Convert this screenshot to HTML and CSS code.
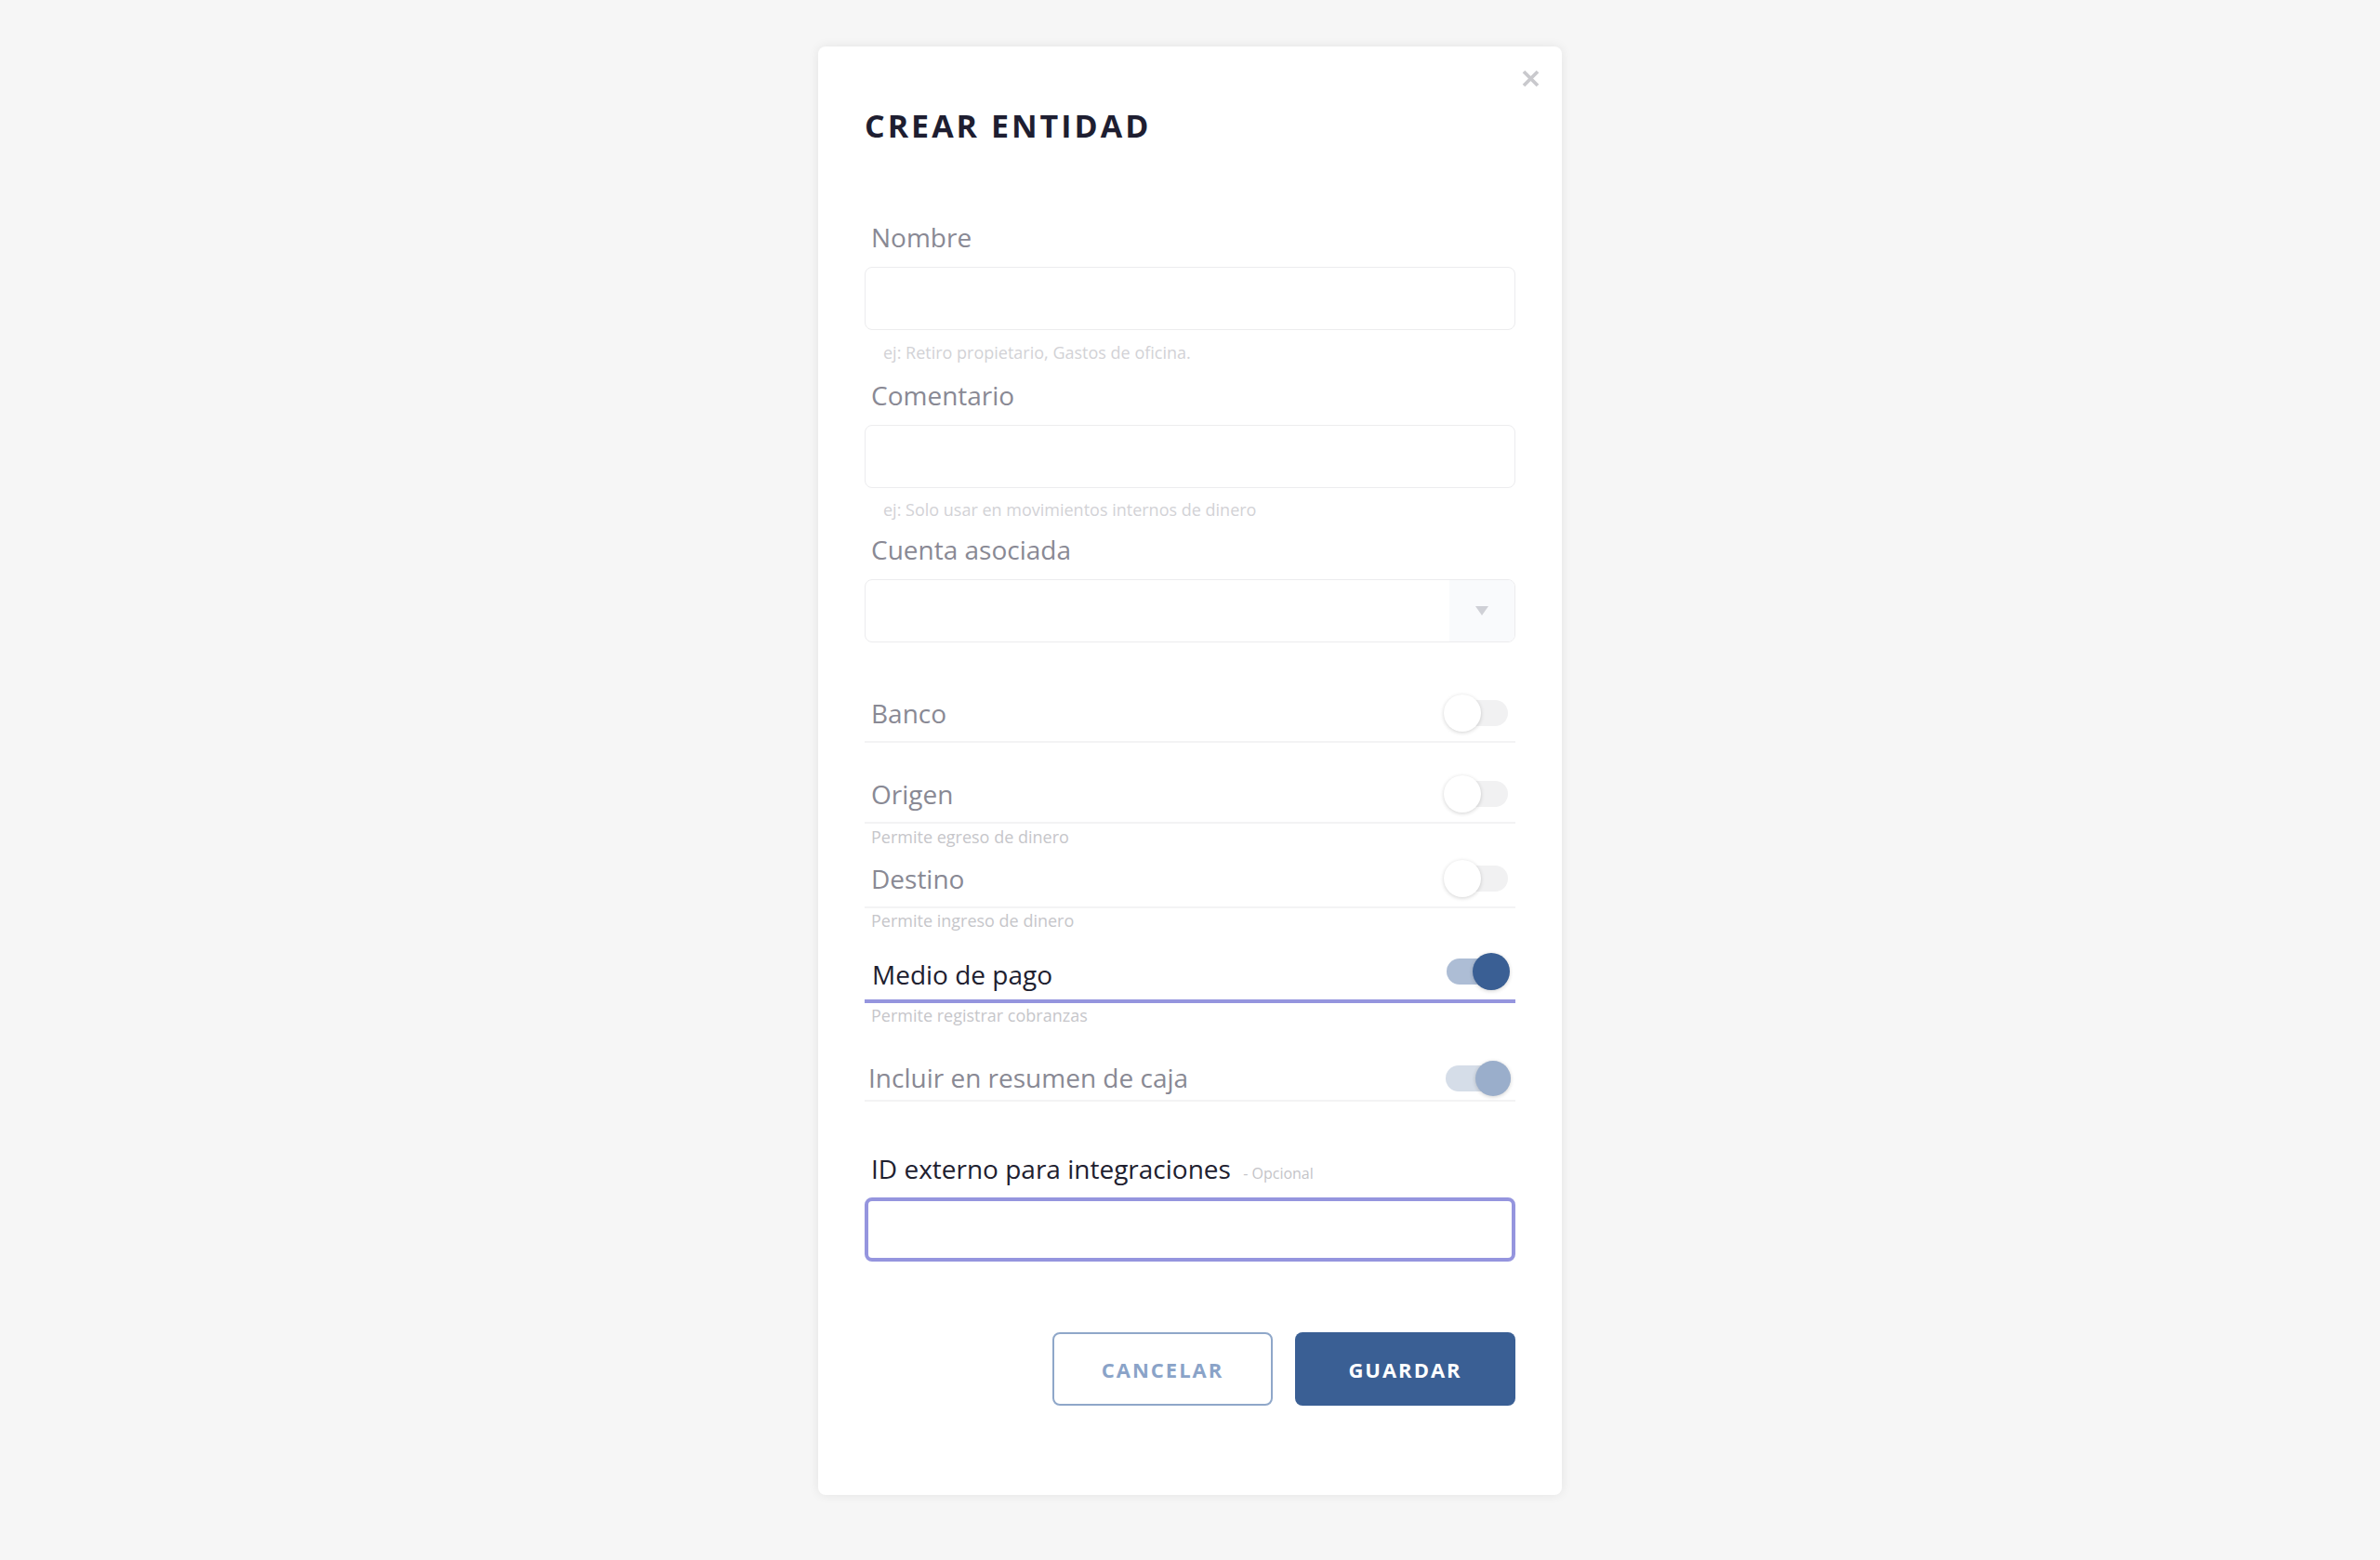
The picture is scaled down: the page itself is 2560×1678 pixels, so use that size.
FILE: index.html
```html
<!DOCTYPE html>
<html lang="es">
<head>
<meta charset="utf-8">
<title>Crear entidad</title>
<link rel="stylesheet" href="styles.css">
</head>
<body>
<div class="modal">
  <button class="close" aria-label="Cerrar">
    <svg width="19" height="19" viewBox="0 0 19 19"><path d="M2 2 L17 17 M17 2 L2 17" stroke="#c9c9cd" stroke-width="3.8" stroke-linecap="butt" fill="none"/></svg>
  </button>
  <h1 class="title">CREAR ENTIDAD</h1>

  <div class="field field-first">
    <div class="label">Nombre</div>
    <div class="input"></div>
    <div class="hint hint-first">ej: Retiro propietario, Gastos de oficina.</div>
  </div>

  <div class="field field-second">
    <div class="label">Comentario</div>
    <div class="input"></div>
    <div class="hint">ej: Solo usar en movimientos internos de dinero</div>
  </div>

  <div class="field field-third">
    <div class="label">Cuenta asociada</div>
    <div class="select">
      <div class="select-value"></div>
      <div class="select-arrow"><span class="triangle"></span></div>
    </div>
  </div>

  <div class="row row-banco">
    <div class="row-label">Banco</div>
    <span class="switch"><span class="knob"></span></span>
  </div>

  <div class="row row-origen">
    <div class="row-label">Origen</div>
    <span class="switch"><span class="knob"></span></span>
  </div>
  <div class="row-hint row-hint-tight">Permite egreso de dinero</div>

  <div class="row row-destino">
    <div class="row-label">Destino</div>
    <span class="switch"><span class="knob"></span></span>
  </div>
  <div class="row-hint">Permite ingreso de dinero</div>

  <div class="row row-active">
    <div class="row-label row-label-dark">Medio de pago</div>
    <span class="switch switch-on"><span class="knob"></span></span>
  </div>
  <div class="row-hint">Permite registrar cobranzas</div>

  <div class="row row-caja">
    <div class="row-label row-label-caja">Incluir en resumen de caja</div>
    <span class="switch switch-muted"><span class="knob"></span></span>
  </div>

  <div class="field field-id">
    <div class="label label-dark">ID externo para integraciones <span class="optional">- Opcional</span></div>
    <div class="input input-focus"></div>
  </div>

  <div class="actions">
    <button class="btn btn-outline">CANCELAR</button>
    <button class="btn btn-primary">GUARDAR</button>
  </div>
</div>
</body>
</html>
```

FILE: styles.css
```css
* { box-sizing: border-box; }

html, body {
  margin: 0;
  padding: 0;
  background: #f6f6f6;
  font-family: "Open Sans", "Noto Sans", sans-serif;
}

body {
  padding-top: 50px;
  min-height: 1678px;
}

.modal {
  position: relative;
  width: 800px;
  margin: 0 auto;
  background: #ffffff;
  border-radius: 8px;
  box-shadow: 0 0 12px rgba(0, 0, 0, 0.08);
  padding: 50px 50px 96px 50px;
  display: flex;
  flex-direction: column;
}

.close {
  position: absolute;
  top: 25px;
  right: 24px;
  width: 19px;
  height: 19px;
  padding: 0;
  border: 0;
  background: transparent;
  display: block;
}
.close svg { display: block; }

.title {
  margin: 15px 0 0 0;
  font-size: 34px;
  line-height: 40px;
  font-weight: 700;
  letter-spacing: 3px;
  color: #1e1e31;
}

.field {
  display: flex;
  flex-direction: column;
  margin-top: 16px;
}
.field-first { margin-top: 83px; }
.field-second { margin-top: 17px; }
.field-third { margin-top: 14px; }

.label {
  font-size: 28px;
  line-height: 34px;
  height: 34px;
  color: #898994;
  padding-left: 7px;
  white-space: nowrap;
}
.label-dark { color: #20202f; }

.optional {
  font-size: 16px;
  line-height: 1;
  color: #c4c4c8;
  margin-left: 6px;
}

.input {
  margin-top: 15px;
  height: 68px;
  border: 1px solid #ececee;
  border-radius: 8px;
  background: #ffffff;
}

.hint {
  margin-top: 11px;
  font-size: 18px;
  line-height: 24px;
  color: #d2d2d6;
  padding-left: 20px;
}
.hint-first { margin-top: 12px; }

.select {
  margin-top: 15px;
  height: 68px;
  border: 1px solid #ececee;
  border-radius: 8px;
  display: flex;
  overflow: hidden;
}
.select-value { flex: 1; }
.select-arrow {
  width: 70px;
  background: #f9fafc;
  display: flex;
  align-items: center;
  justify-content: center;
}
.triangle {
  width: 0;
  height: 0;
  border-left: 7px solid transparent;
  border-right: 7px solid transparent;
  border-top: 10px solid #cfd0d6;
}

.row {
  display: flex;
  align-items: center;
  justify-content: space-between;
  height: 62px;
  border-bottom: 2px solid #f3f3f4;
}
.row-banco { margin-top: 46px; }
.row-origen { margin-top: 25px; }
.row-destino { margin-top: 3px; }
.row-active {
  margin-top: 13px;
  height: 64px;
  border-bottom: 4px solid #9595de;
}
.row-caja {
  margin-top: 33px;
  height: 48px;
}

.row-label {
  font-size: 28px;
  line-height: 34px;
  color: #898994;
  padding-left: 7px;
}
.row-label-dark {
  color: #20202f;
  padding-top: 6px;
  padding-left: 8px;
}
.row-label-caja { padding-left: 4px; padding-bottom: 2px; }

.row-hint {
  margin-top: 1px;
  font-size: 18px;
  line-height: 24px;
  color: #c6c6ca;
  padding-left: 7px;
}
.row-hint-tight { margin-top: 2px; }

.switch {
  position: relative;
  display: block;
  width: 66px;
  height: 28px;
  border-radius: 14px;
  background: #f1f1f2;
  margin-right: 8px;
}
.knob {
  position: absolute;
  top: -6px;
  left: -3px;
  width: 40px;
  height: 40px;
  border-radius: 50%;
  background: #ffffff;
  box-shadow: 0 1px 4px rgba(0, 0, 0, 0.18);
}
.switch-on { background: #adbdd5; }
.switch-on .knob {
  left: 28px;
  background: #3a5f94;
}
.switch-muted {
  background: #d5dde8;
  margin-right: 5px;
  width: 70px;
}
.switch-muted .knob {
  left: 32px;
  top: -5px;
  width: 38px;
  height: 38px;
  background: #9aaecb;
}

.field-id { margin-top: 55px; }
.field-id .input { margin-top: 14px; }
.input-focus {
  height: 69px;
  border: 4px solid #9595de;
}

.actions {
  margin-top: 76px;
  display: flex;
  justify-content: flex-end;
  gap: 24px;
}

.btn {
  width: 237px;
  height: 79px;
  border-radius: 8px;
  font-family: "Open Sans", "Noto Sans", sans-serif;
  font-size: 22px;
  font-weight: 700;
  letter-spacing: 2px;
  cursor: pointer;
}
.btn-outline {
  background: #ffffff;
  border: 2px solid #8fa7c9;
  color: #8aa3c8;
}
.btn-primary {
  background: #3a5f94;
  border: 0;
  color: #ffffff;
}
```
